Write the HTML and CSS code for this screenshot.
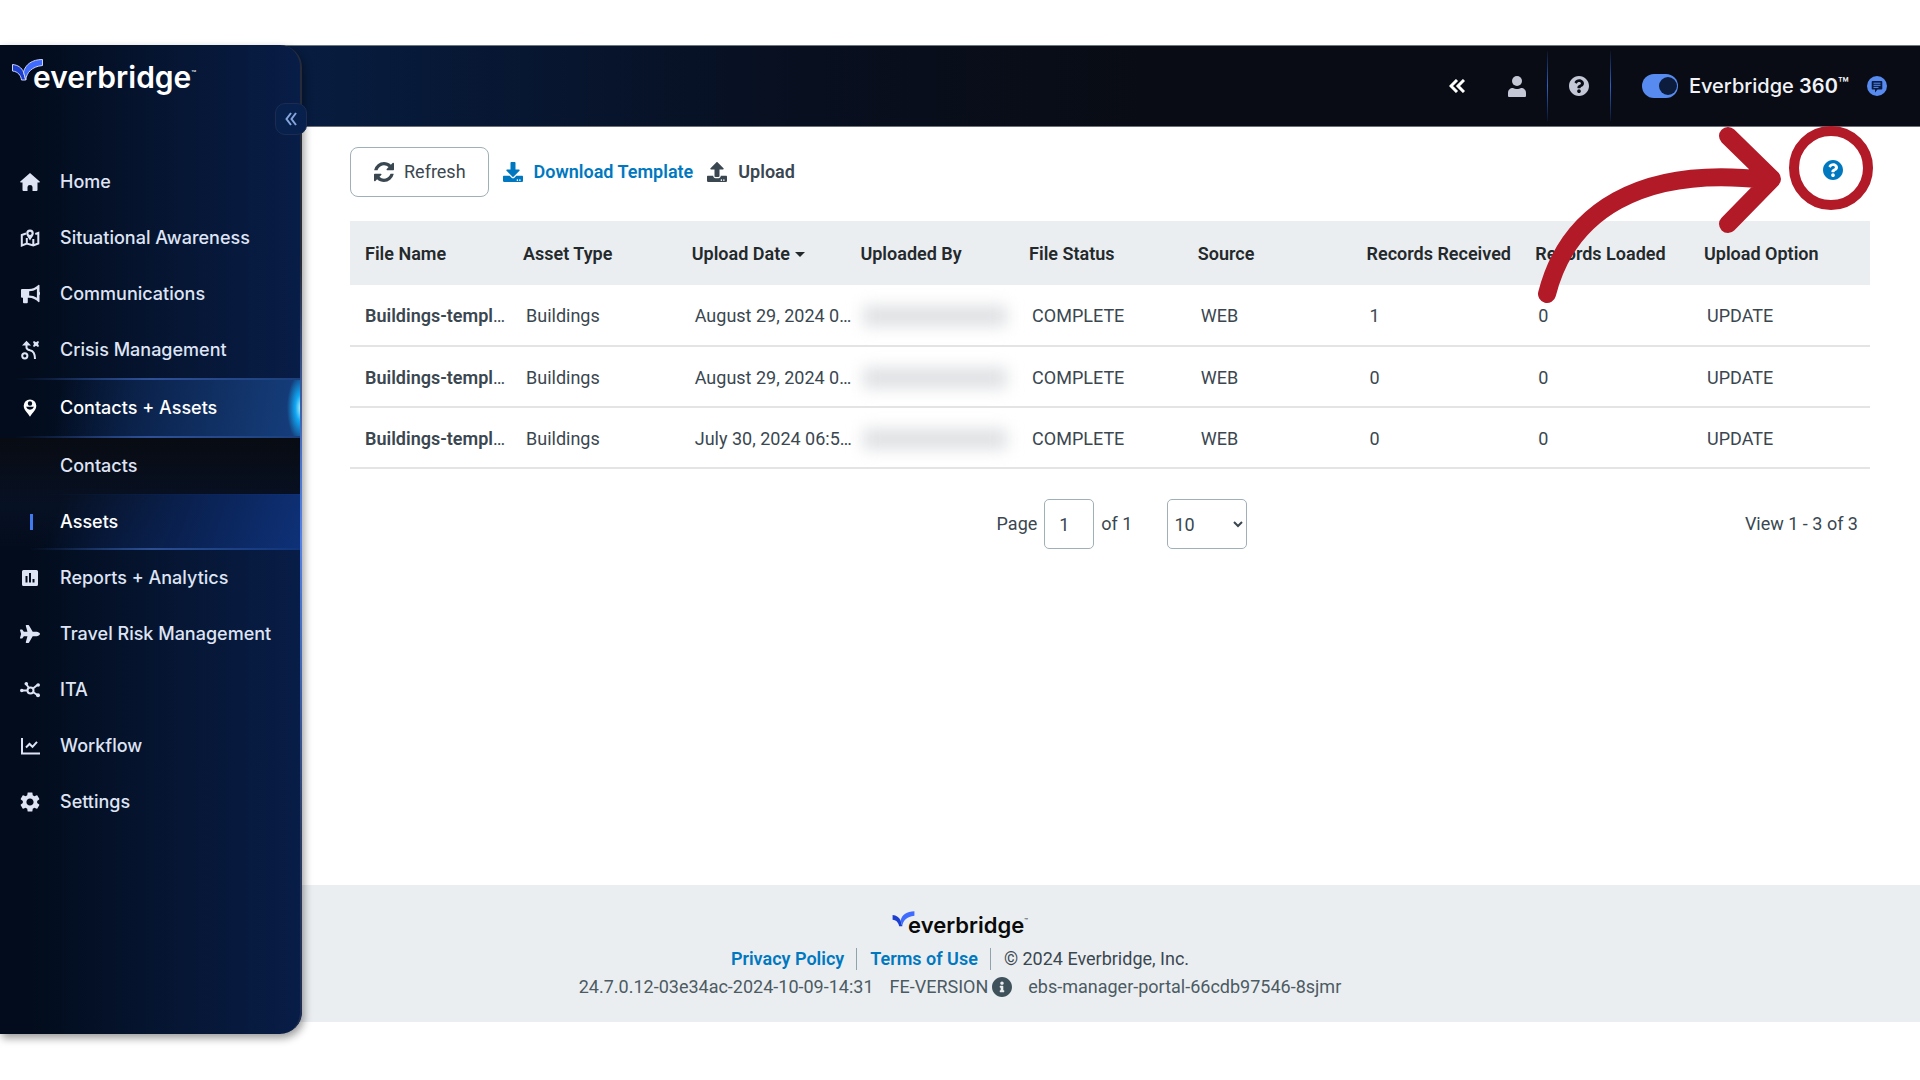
FILE: index.html
```html
<!DOCTYPE html>
<html lang="en">
<head>
<meta charset="utf-8">
<meta name="viewport" content="width=device-width, initial-scale=1">
<title>Everbridge - Assets</title>
<link rel="stylesheet" href="styles.css">
</head>
<body>
<svg class="sprite" aria-hidden="true">
  <symbol id="question" viewBox="8 8 496 496"><path d="M504 256c0 136.997-111.043 248-248 248S8 392.997 8 256C8 119.083 119.043 8 256 8s248 111.083 248 248zM262.655 90c-54.497 0-89.255 22.957-116.549 63.758-3.536 5.286-2.353 12.415 2.715 16.258l34.699 26.31c5.205 3.947 12.621 3.008 16.665-2.122 17.864-22.658 30.113-35.797 57.303-35.797 20.429 0 45.698 13.148 45.698 32.958 0 14.976-12.363 22.667-32.534 33.976C247.128 238.528 216 254.941 216 296v4c0 6.627 5.373 12 12 12h56c6.627 0 12-5.373 12-12v-1.333c0-28.462 83.186-29.647 83.186-106.667 0-58.002-60.165-102-116.531-102zM256 338c-25.365 0-46 20.635-46 46 0 25.364 20.635 46 46 46s46-20.636 46-46c0-25.365-20.635-46-46-46z"/></symbol>
  <symbol id="bird" viewBox="0 0 31 22"><path class="bird-left" d="M.5 5.500C6 6 9.500 8.500 11.500 13L13.800 21H9.500C9 16.500 6 12.500 .5 12Z"/><path class="bird-right" d="M30.500.5C20 .5 13.500 5.500 11.500 13L13.800 21C14.500 13.500 20 7.500 30.500 6.500Z"/></symbol>
</svg>

<div class="app">
  <header class="topbar">
    <button class="top-btn collapse-top" aria-label="Collapse header">
      <svg width="16" height="14" viewBox="0 0 16 14" fill="none" stroke="#fff" stroke-width="3"><path d="M8 1 2 7l6 6M15 1 9 7l6 6"/></svg>
    </button>
    <button class="top-btn user" aria-label="Account">
      <svg width="18" height="21" viewBox="0 0 18 21" fill="#c3c7d6"><circle cx="9" cy="5" r="5"/><path d="M0 20v-3c0-3 2-5 5-5 1.500.8 2.500 1 4 1s2.500-.2 4-1c3 0 5 2 5 5v3q0 1-1 1H1q-1 0-1-1z"/></svg>
    </button>
    <span class="divider"></span>
    <button class="top-btn help" aria-label="Help"><svg width="20" height="20" fill="#c3c7d6"><use href="#question"/></svg></button>
    <span class="divider"></span>
    <label class="suite"><input type="checkbox" class="switch" checked><span class="suite-name">Everbridge <b>360</b><span class="tm">™</span></span></label>
    <button class="top-btn chat" aria-label="Feedback">
      <svg width="20" height="20" viewBox="0 0 20 20"><circle cx="10" cy="10" r="10" fill="#588bf0"/><path d="M5.500 5h9q.8 0 .8.800v7q0 .8-.8.800h-4l-2.500 3v-3H5.500q-.8 0-.8-.8v-7q0-.8.8-.8z" fill="#0b1c44"/><path d="M6.500 7.200h7M6.500 9.300h7M6.500 11.400h5" stroke="#588bf0"/></svg>
    </button>
  </header>

  <aside class="sidebar">
    <a class="logo" href="#"><svg class="logo-mark" width="31" height="22"><use href="#bird"/></svg><span class="logo-word">everbridge</span><span class="logo-tm">™</span></a>
    <button class="collapse" aria-label="Collapse menu">
      <svg width="12" height="14" viewBox="0 0 12 14" fill="none" stroke="#86a5dc" stroke-width="2"><path d="M6 1 1.500 7 6 13M11 1 6.500 7l4.500 6"/></svg>
    </button>
    <nav class="nav">
      <a class="nav-item" href="#"><svg class="ico" viewBox="0 0 20 20"><path d="M10 1 .3 9.500q-.5 1 .5 1H2.500V18q0 1 1 1H7.500v-4q0-2 2.500-2t2.500 2v4h4q1 0 1-1v-7.500h1.700q1 0 .5-1z"/></svg>Home</a>
      <a class="nav-item" href="#"><svg class="ico" viewBox="0 0 20 20"><path class="line" d="M6 5.500 1.800 7v10.500l5-2 6.500 2 5-2V5l-3 1M6.800 15V10M13.300 17.500V11"/><path fill-rule="evenodd" d="M10 1.500a3.800 3.800 0 0 1 3.800 3.800c0 2.500-2.300 4.500-3.800 7.200-1.500-2.700-3.800-4.700-3.800-7.200A3.800 3.800 0 0 1 10 1.500zm0 2.200a1.600 1.600 0 1 0 0 3.200 1.600 1.600 0 0 0 0-3.200z"/></svg>Situational Awareness</a>
      <a class="nav-item" href="#"><svg class="ico" viewBox="0 0 20 20"><path fill-rule="evenodd" d="M18.700.8q.8 0 .8.700v6.300q.7.500.7 1.700t-.7 1.700v6.300q0 .8-.8.800-4.500-4.500-9.700-4.500H7.800v4.500q0 1-1 1H4q-1 0-1-1v-4.500H2q-1 0-1-1V6q0-1 1-1h7Q14.200 5 18.700.8zM16.900 5Q13.500 7.200 9.200 7.300v4.200q4.300.1 7.700 2.300z"/></svg>Communications</a>
      <a class="nav-item" href="#"><svg class="ico" viewBox="0 0 20 20"><circle class="line" cx="4.800" cy="15.800" r="2.600"/><path class="line" d="M6.500 3v4.500Q6.500 9.500 10 10.300 15 11.300 15 19"/><path d="M6.500.8 11 5.500H2zM13 2l1-1 2 1.200L18 1l1 1-1 2 1 2-1 1-2-1.200L14 7l-1-1 1-2z"/></svg>Crisis Management</a>
      <a class="nav-item active" href="#"><svg class="ico" viewBox="0 0 20 20"><path fill-rule="evenodd" d="M10 1.500a6.300 6.300 0 0 1 6.300 6.300C16.300 12 12.500 14.500 10 18.800 7.500 14.500 3.700 12 3.700 7.800A6.300 6.300 0 0 1 10 1.500zm0 1.800a2.200 2.200 0 1 0 0 4.400 2.200 2.200 0 0 0 0-4.400zM6 8.800q1.300 3 4 3t4-3z"/></svg>Contacts + Assets</a>
      <div class="submenu">
        <a class="nav-item sub" href="#"><span class="marker"></span>Contacts</a>
        <a class="nav-item sub current" href="#"><span class="marker"></span>Assets</a>
      </div>
      <a class="nav-item" href="#"><svg class="ico" viewBox="0 0 20 20"><path fill-rule="evenodd" d="M3.500 2h13q1.500 0 1.500 1.500v13q0 1.500-1.500 1.500h-13Q2 18 2 16.500v-13Q2 2 3.500 2zM5.500 8v6.500h2V8zm3.500-3v9.500h2V5zm3.500 6v3.500h2V11z"/></svg>Reports + Analytics</a>
      <a class="nav-item" href="#"><svg class="ico" viewBox="0 0 576 512"><path d="M480 192H365.710L260.610 8.060A16.014 16.014 0 0 0 246.710 0h-65.500c-10.630 0-18.300 10.170-15.380 20.390L214.860 192H112l-43.200-57.600c-3.020-4.030-7.770-6.400-12.800-6.400H16.010C5.600 128-2.040 137.780.49 147.880L32 256 .49 364.120C-2.040 374.220 5.600 384 16.010 384H56c5.040 0 9.780-2.370 12.800-6.400L112 320h102.860l-49.030 171.600c-2.920 10.220 4.750 20.400 15.380 20.400h65.500c5.740 0 11.040-3.080 13.890-8.060L365.710 320H480c35.350 0 96-28.650 96-64s-60.650-64-96-64z"/></svg>Travel Risk Management</a>
      <a class="nav-item" href="#"><svg class="ico" viewBox="0 0 20 20"><circle class="line" cx="10.500" cy="10.500" r="3"/><path class="line" d="M2 10.500h5.500M6.500 4.500 9 8M13 8.500l5-4M13 12l5 3.500"/><circle cx="1.800" cy="10.500" r="1.800"/><circle cx="6.300" cy="3.800" r="1.800"/><circle cx="18.200" cy="5" r="1.800"/><circle cx="18" cy="15.200" r="2"/></svg>ITA</a>
      <a class="nav-item" href="#"><svg class="ico" viewBox="0 0 20 20"><path class="line" d="M2 2v15.500h18M6 11.500l3.500-3.500 3 2.800 4.500-5"/></svg>Workflow</a>
      <a class="nav-item" href="#"><svg class="ico" viewBox="2 2 20 20"><path d="M19.140 12.940c.04-.3.06-.61.06-.94 0-.32-.02-.64-.07-.94l2.030-1.580c.18-.14.23-.41.12-.61l-1.920-3.320c-.12-.22-.37-.29-.59-.22l-2.390.96c-.5-.38-1.030-.7-1.620-.94l-.36-2.540c-.04-.24-.24-.41-.48-.41h-3.840c-.24 0-.43.17-.47.41l-.36 2.540c-.59.24-1.130.57-1.620.94l-2.390-.96c-.22-.08-.47 0-.59.22L2.740 8.870c-.12.21-.08.47.12.61l2.030 1.580c-.05.3-.09.63-.09.94s.02.64.07.94l-2.030 1.580c-.18.14-.23.41-.12.61l1.920 3.320c.12.22.37.29.59.22l2.390-.96c.5.38 1.030.7 1.620.94l.36 2.540c.05.24.24.41.48.41h3.840c.24 0 .44-.17.47-.41l.36-2.540c.59-.24 1.130-.56 1.620-.94l2.390.96c.22.08.47 0 .59-.22l1.920-3.320c.12-.22.07-.47-.12-.61l-2.010-1.580zM12 15.600c-1.980 0-3.600-1.620-3.600-3.600s1.620-3.600 3.600-3.600 3.600 1.620 3.600 3.600-1.620 3.600-3.600 3.600z"/></svg>Settings</a>
    </nav>
  </aside>

  <main class="content">
    <div class="toolbar">
      <button class="refresh"><svg width="20" height="20" viewBox="0 0 1536 1536" fill="currentColor"><path d="M1511 928q0 5-1 7-64 268-268 434.500t-478 166.500q-146 0-282.500-55t-243.500-157l-129 129q-19 19-45 19t-45-19-19-45v-448q0-26 19-45t45-19h448q26 0 45 19t19 45-19 45l-137 137q71 66 161 102t187 36q134 0 250-65t186-179q11-17 53-117 8-23 30-23h192q13 0 22.500 9.500t9.500 22.500zm25-800v448q0 26-19 45t-45 19h-448q-26 0-45-19t-19-45 19-45l138-138q-148-137-349-137-134 0-250 65t-186 179q-11 17-53 117-8 23-30 23h-199q-13 0-22.500-9.500t-9.500-22.500v-7q65-268 270-434.500t480-166.500q146 0 284 55.500t245 156.500l130-129q19-19 45-19t45 19 19 45z"/></svg><span>Refresh</span></button>
      <a class="tool download" href="#"><svg width="20" height="20" viewBox="0 0 512 512" fill="currentColor"><path d="M216 0h80c13.300 0 24 10.700 24 24v168h87.700c17.800 0 26.700 21.500 14.100 34.100L269.700 378.300c-7.500 7.500-19.800 7.500-27.300 0L90.100 226.100c-12.600-12.600-3.700-34.100 14.100-34.100H192V24c0-13.300 10.700-24 24-24zm296 376v112c0 13.300-10.700 24-24 24H24c-13.300 0-24-10.700-24-24V376c0-13.300 10.700-24 24-24h146.700l49 49c20.100 20.100 52.500 20.100 72.600 0l49-49H488c13.300 0 24 10.700 24 24zm-124 88c0-11-9-20-20-20s-20 9-20 20 9 20 20 20 20-9 20-20zm64 0c0-11-9-20-20-20s-20 9-20 20 9 20 20 20 20-9 20-20z"/></svg>Download Template</a>
      <button class="tool"><svg width="20" height="20" viewBox="0 0 512 512" fill="currentColor"><path d="M296 384h-80c-13.300 0-24-10.700-24-24V192h-87.700c-17.800 0-26.700-21.500-14.100-34.100L242.300 5.700c7.500-7.500 19.800-7.500 27.300 0l152.200 152.200c12.600 12.600 3.700 34.100-14.100 34.100H320v168c0 13.300-10.700 24-24 24zm216-8v112c0 13.300-10.700 24-24 24H24c-13.300 0-24-10.700-24-24V376c0-13.300 10.700-24 24-24h136v8c0 30.900 25.100 56 56 56h80c30.900 0 56-25.100 56-56v-8h136c13.300 0 24 10.700 24 24zm-124 88c0-11-9-20-20-20s-20 9-20 20 9 20 20 20 20-9 20-20zm64 0c0-11-9-20-20-20s-20 9-20 20 9 20 20 20 20-9 20-20z"/></svg>Upload</button>
      <a class="page-help" href="#" aria-label="Page help"><svg width="20" height="20" fill="currentColor"><use href="#question"/></svg></a>
    </div>

    <table class="grid">
      <colgroup><col class="col-name"><col><col><col><col><col><col><col><col class="col-option"></colgroup>
      <thead><tr><th>File Name</th><th>Asset Type</th><th>Upload Date<span class="caret"></span></th><th>Uploaded By</th><th>File Status</th><th>Source</th><th>Records Received</th><th>Records Loaded</th><th>Upload Option</th></tr></thead>
      <tbody>
        <tr><td><b>Buildings-templ</b>…</td><td>Buildings</td><td>August 29, 2024 0…</td><td><span class="mask"></span></td><td>COMPLETE</td><td>WEB</td><td>1</td><td>0</td><td>UPDATE</td></tr>
        <tr><td><b>Buildings-templ</b>…</td><td>Buildings</td><td>August 29, 2024 0…</td><td><span class="mask"></span></td><td>COMPLETE</td><td>WEB</td><td>0</td><td>0</td><td>UPDATE</td></tr>
        <tr><td><b>Buildings-templ</b>…</td><td>Buildings</td><td>July 30, 2024 06:5…</td><td><span class="mask"></span></td><td>COMPLETE</td><td>WEB</td><td>0</td><td>0</td><td>UPDATE</td></tr>
      </tbody>
    </table>

    <div class="pager">
      <div class="pager-controls">
        <label for="page">Page</label>
        <input id="page" class="page-input" type="text" value="1">
        <span>of 1</span>
        <select class="page-size" aria-label="Rows per page"><option>10</option><option>20</option><option>50</option></select>
      </div>
      <span class="pager-view">View 1 - 3 of 3</span>
    </div>
  </main>

  <footer class="footer">
    <div class="logo logo-footer"><svg class="logo-mark" width="23" height="16"><use href="#bird"/></svg><span class="logo-word">everbridge</span><span class="logo-tm">™</span></div>
    <div class="legal"><a href="#">Privacy Policy</a><a href="#">Terms of Use</a><span>© 2024 Everbridge, Inc.</span></div>
    <div class="build"><span>24.7.0.12-03e34ac-2024-10-09-14:31</span><span class="fe">FE-VERSION <svg width="20" height="20" viewBox="8 8 496 496" fill="#3f525c"><path d="M256 8C119.043 8 8 119.083 8 256c0 136.997 111.043 248 248 248s248-111.003 248-248C504 119.083 392.957 8 256 8zm0 110c23.196 0 42 18.804 42 42s-18.804 42-42 42-42-18.804-42-42 18.804-42 42-42zm56 254c0 6.627-5.373 12-12 12h-88c-6.627 0-12-5.373-12-12v-24c0-6.627 5.373-12 12-12h12v-64h-12c-6.627 0-12-5.373-12-12v-24c0-6.627 5.373-12 12-12h64c6.627 0 12 5.373 12 12v100h12c6.627 0 12 5.373 12 12v24z"/></svg></span><span>ebs-manager-portal-66cdb97546-8sjmr</span></div>
  </footer>

  <!-- Callout pointing at the page help icon -->
  <svg class="callout" width="340" height="190" viewBox="1540 120 340 190" fill="none" stroke="#b21a28" aria-hidden="true">
    <path d="M1547 294C1568 212 1640 165 1766 180M1728 136 1772 179 1728 224" stroke-width="18" stroke-linecap="round" stroke-linejoin="round"/>
    <circle cx="1831" cy="168" r="37" stroke-width="10"/>
  </svg>
</div>
</body>
</html>
```
FILE: styles.css
```css
* {
  box-sizing: border-box;
}

body {
  margin: 0;
  background: #fff;
  color: #3a4750;
  font: 18px/24px Roboto, "Liberation Sans", sans-serif;
}

a {
  color: inherit;
  text-decoration: none;
}

b {
  font-weight: 600;
}

button {
  margin: 0;
  padding: 0;
  border: 0;
  background: none;
  color: inherit;
  font: inherit;
  cursor: pointer;
}

svg {
  display: block;
  flex: none;
}

.sprite {
  position: absolute;
  width: 0;
  height: 0;
}

.app {
  position: relative;
  display: grid;
  grid-template-columns: 302px minmax(0, 1fr);
  grid-template-rows: 82px 1fr auto;
  min-height: calc(100vh - 91px);
  margin: 45px 0 46px;
}

/* Top bar */
.topbar {
  grid-area: 1 / 1 / 2 / 3;
  display: flex;
  align-items: center;
  justify-content: flex-end;
  padding: 0 33px 0 0;
  border-top: 1px solid #6b7880;
  border-bottom: 1px solid #6b7078;
  background: linear-gradient(90deg, #071c3f 16%, #080f1f 42%, #090c14 60%);
}

.collapse-top {
  margin-right: 43px;
}

.user {
  margin-right: 21px;
}

.divider {
  width: 1px;
  height: 70px;
  background: linear-gradient(#0a1428, #2f62c4 50%, #0a1428);
}

.help {
  margin: 0 21px;
}

.suite {
  display: flex;
  align-items: center;
  gap: 11px;
  margin: 0 18px 0 31px;
  color: #f1f3f8;
  font: 500 20px/24px Inter, sans-serif;
}

.tm {
  font-size: 18px;
  line-height: 18px;
  vertical-align: 2px;
}

.switch {
  appearance: none;
  display: flex;
  justify-content: flex-end;
  align-items: center;
  width: 36px;
  height: 24px;
  margin: 0;
  padding: 0 1px;
  border-radius: 12px;
  background: #588bf0;
}

.switch::before {
  content: "";
  width: 18px;
  height: 18px;
  border-radius: 50%;
  background: #0c1c3c;
}

/* Sidebar */
.sidebar {
  grid-area: 1 / 1 / 4 / 2;
  z-index: 1;
  position: relative;
  border-radius: 0 22px 22px 0;
  background: linear-gradient(90deg, #020c1c 10%, #061634 60%, #081d47);
  box-shadow: 2px 4px 8px rgba(0, 0, 0, 0.4);
}

.sidebar::after {
  content: "";
  position: absolute;
  inset: 0;
  padding: 0 2px 0 0;
  border-radius: inherit;
  background: linear-gradient(#262b38 22%, #4a74cc 42%, #5482e6 50%, #4168b8 62%, #2c3c60 80%, #1c2c50);
  mask: linear-gradient(#000 0 0) content-box exclude, linear-gradient(#000 0 0);
  pointer-events: none;
}

.logo {
  display: flex;
  align-items: flex-start;
  height: 109px;
  padding: 14px 0 0 12px;
  color: #fff;
}

.logo-mark {
  overflow: visible;
  stroke: #ccd2fa;
  stroke-width: 1;
}

.bird-left {
  fill: #1d3fcf;
}

.bird-right {
  fill: #3f6bff;
}

.logo-word {
  margin-left: -10px;
  font: 600 30px/36px Inter, sans-serif;
}

.logo-tm {
  font: 8px/28px Inter, sans-serif;
}

.collapse {
  position: absolute;
  z-index: 2;
  top: 58px;
  right: -5px;
  display: flex;
  align-items: center;
  justify-content: center;
  width: 32px;
  height: 32px;
  border: 1px solid #1c2c50;
  border-radius: 10px;
  background: #08204c;
}

.nav-item {
  display: flex;
  align-items: center;
  gap: 20px;
  height: 56px;
  padding-left: 20px;
  color: #dfe4f5;
  font: 500 18px/24px Inter, sans-serif;
}

.ico {
  width: 20px;
  height: 20px;
  fill: currentColor;
}

.line {
  fill: none;
  stroke: currentColor;
  stroke-width: 2;
}

.active {
  height: 60px;
  border: solid transparent;
  border-width: 2px 0;
  border-image: linear-gradient(90deg, transparent 5%, #2f5096 50%, #1b3f7c) 1;
  border-image-width: 2px 0;
  background:
    radial-gradient(14px 34px at 301px 50%, #b8f6ff, #12a8f4 40%, transparent),
    linear-gradient(100deg, transparent 20%, #0c2550 50%, #163f7e);
  color: #fff;
}

.submenu {
  background: linear-gradient(#080b12, #071124 60%, transparent);
}

.marker {
  width: 3px;
  height: 16px;
  margin: 0 7px 0 10px;
}

.current {
  border-top: 1px solid transparent;
  border-bottom: 2px solid transparent;
  border-image: linear-gradient(90deg, transparent 10%, #2b4f92 50%, #10347a) 1;
  border-image-width: 0 0 2px;
  background: linear-gradient(110deg, transparent 20%, #0a2150 60%, #0e3178);
  color: #fff;
}

.current .marker {
  background: #4079f0;
}

/* Content */
.content {
  grid-area: 2 / 2 / 3 / 3;
  padding: 20px 50px 40px 48px;
}

.toolbar {
  display: flex;
  align-items: center;
  height: 50px;
  margin-bottom: 24px;
}

.refresh {
  display: flex;
  align-items: center;
  gap: 10px;
  height: 50px;
  padding: 0 22px 0 23px;
  border: 1px solid #9fb0b8;
  border-radius: 8px;
}

.tool {
  display: flex;
  align-items: center;
  gap: 11px;
  margin-left: 14px;
  font-weight: 600;
}

.download {
  color: #0078c0;
}

.page-help {
  margin: 0 27px 4px auto;
  color: #0078c0;
}

.grid {
  width: 100%;
  table-layout: fixed;
  border-collapse: collapse;
}

.col-name {
  width: 161px;
}

.col-option {
  width: 178px;
}

.grid th {
  height: 64px;
  padding: 1px 0 0 12px;
  background: #ebeef1;
  color: #24292c;
  font-weight: 600;
  text-align: left;
  white-space: nowrap;
}

.grid td {
  height: 61px;
  padding: 2px 0 0 15px;
  border-bottom: 2px solid #e4e4e4;
  white-space: nowrap;
}

.grid td:first-child,
.grid th:first-child {
  padding-left: 15px;
}

.caret {
  display: inline-block;
  margin-left: 5px;
  border: solid transparent;
  border-width: 5px 5px 0;
  border-top-color: #24292c;
  vertical-align: 3px;
}

.mask {
  display: block;
  height: 20px;
  width: 144px;
  background: #dddfe2;
  filter: blur(8px);
}

.pager {
  display: grid;
  grid-template-columns: 1fr auto 1fr;
  align-items: center;
  margin-top: 30px;
}

.pager-controls {
  grid-column: 2;
  display: flex;
  align-items: center;
  gap: 7px;
  padding-left: 24px;
}

.page-input,
.page-size {
  height: 50px;
  margin: 0;
  border: 1px solid #9fb0b8;
  border-radius: 5px;
  background: #fff;
  color: inherit;
  font: inherit;
}

.page-input {
  width: 50px;
  padding: 0 14px;
}

.page-size {
  width: 80px;
  margin-left: 28px;
  padding: 0 2px;
}

.pager-view {
  padding-right: 12px;
  text-align: right;
}

/* Footer */
.footer {
  grid-area: 3 / 1 / 4 / 3;
  display: flex;
  flex-direction: column;
  align-items: center;
  margin-bottom: 12px;
  padding: 26px 0 23px;
  background: #ebeef1;
}

.logo-footer {
  height: 36px;
  padding: 0;
  color: #0a0a0a;
}

.logo-footer .logo-mark {
  stroke: none;
}

.logo-footer .logo-word {
  margin-left: -7px;
  font-size: 22px;
  line-height: 28px;
}

.logo-footer .logo-tm {
  font-size: 6px;
  line-height: 20px;
}

.legal,
.build {
  display: flex;
  align-items: center;
  height: 24px;
}

.legal {
  margin-bottom: 4px;
}

.legal a {
  margin-right: 13px;
  padding-right: 12px;
  border-right: 1px solid #8fa3ad;
  color: #0078c0;
  font-weight: 600;
  line-height: 22px;
}

.build {
  gap: 16px;
  color: #4c5b63;
}

.fe {
  display: flex;
  align-items: center;
  gap: 4px;
}

.callout {
  position: absolute;
  z-index: 2;
  top: 75px;
  right: 40px;
  overflow: visible;
  pointer-events: none;
}
```
